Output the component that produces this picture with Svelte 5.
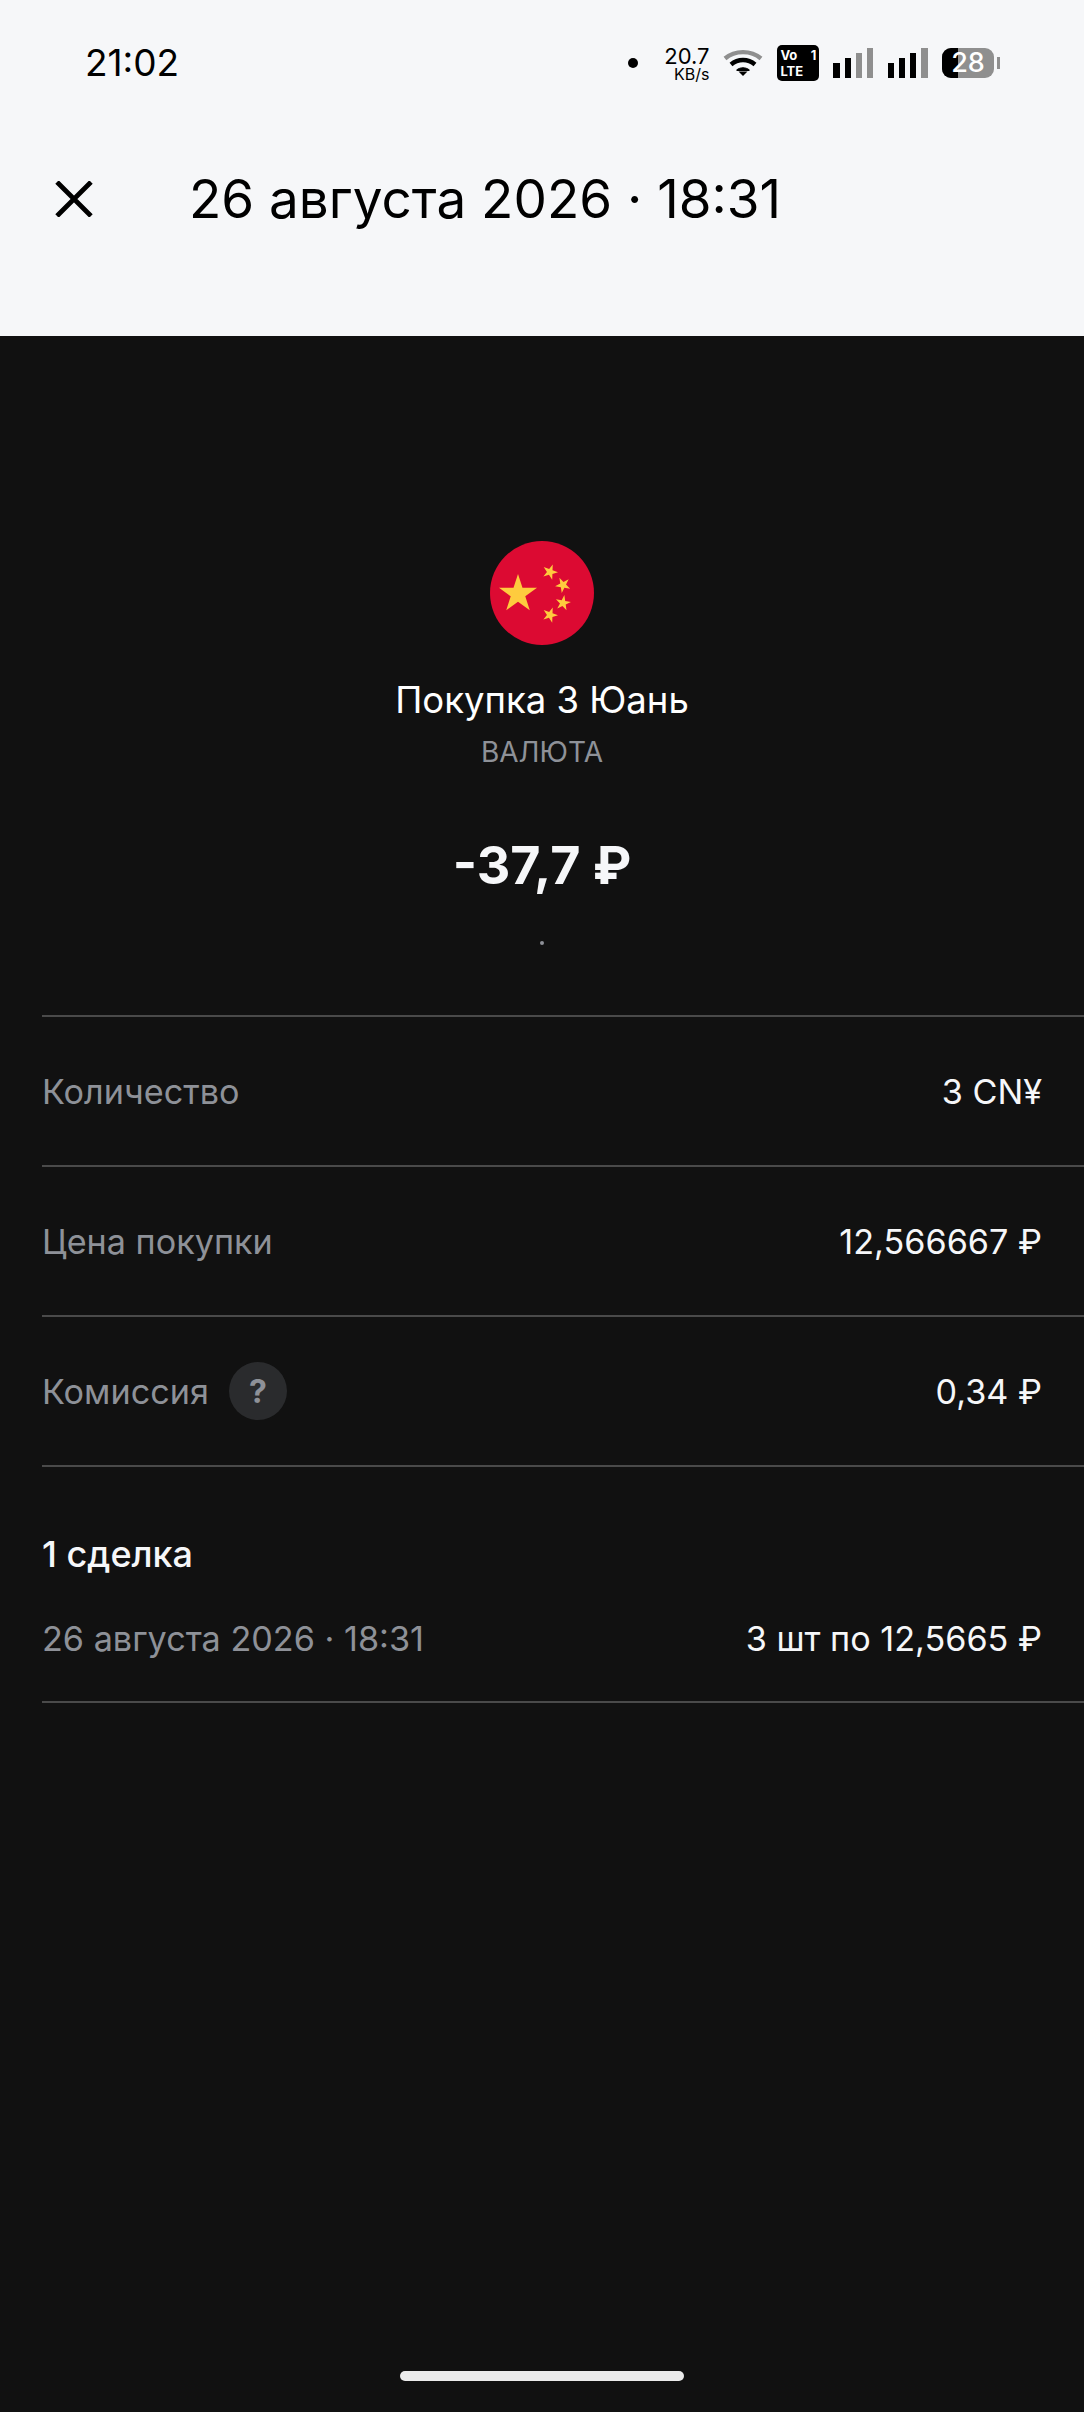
<script>
    // rows of the operation details
    const rows = [
        { label: 'Количество', value: '3 CN¥' },
        { label: 'Цена покупки', value: '12,566667 ₽' },
        { label: 'Комиссия', value: '0,34 ₽', hint: true }
    ];

    // signal bars colours, left to right
    const black = '#000';
    const grey = '#8f8f8f';
    const sim1 = [black, black, grey, grey];
    const sim2 = [black, black, black, grey];

    // five pointed star for the flag
    function star(cx, cy, r, rot = 0) {
        let pts = [];
        for (let i = 0; i < 10; i++) {
            const rad = i % 2 ? r * 0.382 : r;
            const a = (rot - 90 + i * 36) * Math.PI / 180;
            pts.push(`${(cx + rad * Math.cos(a)).toFixed(2)},${(cy + rad * Math.sin(a)).toFixed(2)}`);
        }
        return pts.join(' ');
    }
</script>

<main>
    <header>
        <div class="status">
            <span class="time">21:02</span>
            <div class="status-right">
                <span class="dot"></span>
                <div class="speed"><span>20.7</span><small>KB/s</small></div>
                <svg class="wifi" width="40" height="28" viewBox="0 0 40 28">
                    <path d="M2 9.5C12 1 28 1 38 9.5" fill="none" stroke="#8f8f8f" stroke-width="4.4"/>
                    <path d="M8 15.5C15 9.5 25 9.5 32 15.5" fill="none" stroke="#000" stroke-width="4.4"/>
                    <path d="M13.5 21C17.5 18 22.5 18 26.5 21L26 21.5H14Z" fill="#000" stroke="#000" stroke-width="1"/>
                    <path d="M15.5 22.5H24.5L20 27Z" fill="#000"/>
                </svg>
                <div class="volte">
                    <div class="volte-top"><span>Vo</span><span>1</span></div>
                    <div>LTE</div>
                </div>
                {#each [sim1, sim2] as sim}
                    <div class="signal">
                        {#each sim as color, i}
                            <span style="height: {15 + i * 5}px; background: {color}"></span>
                        {/each}
                    </div>
                {/each}
                <div class="battery">
                    <div class="battery-body"><span class="battery-fill"></span><span class="battery-num">28</span></div>
                    <span class="battery-tip"></span>
                </div>
            </div>
        </div>
        <div class="titlebar">
            <svg class="close" width="38" height="36" viewBox="0 0 38 36">
                <path d="M2 1L36 35M36 1L2 35" fill="none" stroke="#000" stroke-width="4.8"/>
            </svg>
            <h1>26 августа 2026 · 18:31</h1>
        </div>
    </header>

    <section class="hero">
        <svg class="flag" width="104" height="104" viewBox="0 0 104 104">
            <circle cx="52" cy="52" r="52" fill="#dc0a32"/>
            <polygon points={star(28, 53, 20)} fill="#fecb3e"/>
            <polygon points={star(60, 31, 8, 20)} fill="#fecb3e"/>
            <polygon points={star(73, 44, 8, 45)} fill="#fecb3e"/>
            <polygon points={star(73, 62, 8, 10)} fill="#fecb3e"/>
            <polygon points={star(60, 74, 8, 20)} fill="#fecb3e"/>
        </svg>
        <div class="name">Покупка 3 Юань</div>
        <div class="kind">ВАЛЮТА</div>
        <div class="amount">-37,7 ₽</div>
        <span class="tiny-dot"></span>
    </section>

    <section class="list">
        {#each rows as row}
            <div class="row">
                <div class="label">
                    <span>{row.label}</span>
                    {#if row.hint}
                        <span class="hint">?</span>
                    {/if}
                </div>
                <span class="value">{row.value}</span>
            </div>
        {/each}
        <div class="deals">
            <h2>1 сделка</h2>
            <div class="deal">
                <span class="label">26 августа 2026 · 18:31</span>
                <span class="value">3 шт по 12,5665 ₽</span>
            </div>
        </div>
    </section>

    <div class="home-wrap"><span class="home"></span></div>
</main>

<style>
    :global(body) {
        margin: 0;
        background: #111111;
        font-family: Inter, "Noto Sans", sans-serif;
    }

    main {
        display: flex;
        flex-direction: column;
        width: 1084px;
        height: 2412px;
        background: #111111;
        overflow: hidden;
    }

    header {
        height: 336px;
        background: #f6f7f9;
        color: #000;
    }

    .status {
        display: flex;
        align-items: center;
        justify-content: space-between;
        height: 36px;
        padding: 45px 84px 0 85px;
    }

    .time {
        font-size: 37px;
        line-height: 36px;
    }

    .status-right {
        display: flex;
        align-items: center;
    }

    .dot {
        width: 10px;
        height: 10px;
        margin-right: 28px;
        border-radius: 50%;
        background: #000;
    }

    .speed {
        display: flex;
        flex-direction: column;
        align-items: flex-end;
        width: 43px;
        margin-right: 14px;
        padding-top: 2px;
        font-size: 22px;
        line-height: 20px;
    }

    .speed small {
        font-size: 16px;
        line-height: 17px;
    }

    .wifi {
        margin-right: 14px;
    }

    .volte {
        box-sizing: border-box;
        width: 42px;
        height: 36px;
        margin-right: 14px;
        padding: 2px 3px;
        border-radius: 5px;
        background: #000;
        color: #fff;
        font-size: 13px;
        font-weight: 700;
        line-height: 16px;
    }

    .volte-top {
        display: flex;
        justify-content: space-between;
    }

    .signal {
        display: flex;
        align-items: flex-end;
        gap: 4.6px;
        height: 30px;
        margin-right: 14.5px;
    }

    .signal span {
        width: 6.5px;
    }

    .battery {
        display: flex;
        align-items: center;
    }

    .battery-body {
        position: relative;
        display: flex;
        align-items: center;
        justify-content: center;
        width: 52px;
        height: 30px;
        border-radius: 9px;
        background: #8f8f8f;
    }

    .battery-fill {
        position: absolute;
        left: 0;
        top: 0;
        bottom: 0;
        width: 16px;
        border-radius: 9px 0 0 9px;
        background: #000;
    }

    .battery-num {
        position: relative;
        color: #fff;
        font-size: 27px;
        font-weight: 500;
        line-height: 30px;
    }

    .battery-tip {
        width: 3px;
        height: 12px;
        margin-left: 3px;
        background: #8f8f8f;
    }

    .titlebar {
        display: flex;
        align-items: center;
        height: 60px;
        margin-top: 88px;
        padding-left: 55px;
    }

    .close {
        margin-right: 96px;
    }

    h1 {
        margin: 0;
        font-size: 53px;
        font-weight: 400;
        line-height: 60px;
    }

    .hero {
        display: flex;
        flex-direction: column;
        align-items: center;
        padding-top: 205px;
    }

    .flag {
        display: block;
    }

    .name {
        margin-top: 33px;
        color: #fff;
        font-size: 36.5px;
        line-height: 44px;
    }

    .kind {
        margin-top: 12px;
        color: #8e9198;
        font-size: 28px;
        line-height: 36px;
    }

    .amount {
        margin-top: 64px;
        color: #f6f7f9;
        font-size: 52px;
        font-weight: 700;
        line-height: 64px;
    }

    .tiny-dot {
        width: 4px;
        height: 4px;
        margin-top: 43px;
        border-radius: 50%;
        background: #8e9198;
    }

    .list {
        margin: 70px 0 0 42px;
        border-top: 2px solid #4a4a4a;
    }

    .row {
        display: flex;
        align-items: center;
        justify-content: space-between;
        box-sizing: border-box;
        height: 150px;
        padding-right: 42px;
        border-bottom: 2px solid #4a4a4a;
    }

    .label {
        display: flex;
        align-items: center;
        color: #8e9198;
        font-size: 34.2px;
    }

    .value {
        color: #f6f7f9;
        font-size: 34.2px;
    }

    .hint {
        display: flex;
        align-items: center;
        justify-content: center;
        width: 58px;
        height: 58px;
        margin-left: 20px;
        border-radius: 50%;
        background: #2a2b2d;
        font-size: 32px;
        font-weight: 700;
    }

    .deals {
        box-sizing: border-box;
        height: 236px;
        padding: 65px 42px 0 0;
        border-bottom: 2px solid #4a4a4a;
    }

    h2 {
        margin: 0;
        color: #f6f7f9;
        font-size: 36px;
        font-weight: 500;
        line-height: 44px;
    }

    .deal {
        display: flex;
        justify-content: space-between;
        align-items: center;
        margin-top: 41px;
        line-height: 44px;
    }

    .home-wrap {
        display: flex;
        justify-content: center;
        margin-top: auto;
        padding-bottom: 31px;
    }

    .home {
        width: 284px;
        height: 10px;
        border-radius: 5px;
        background: #ebebeb;
    }
</style>
